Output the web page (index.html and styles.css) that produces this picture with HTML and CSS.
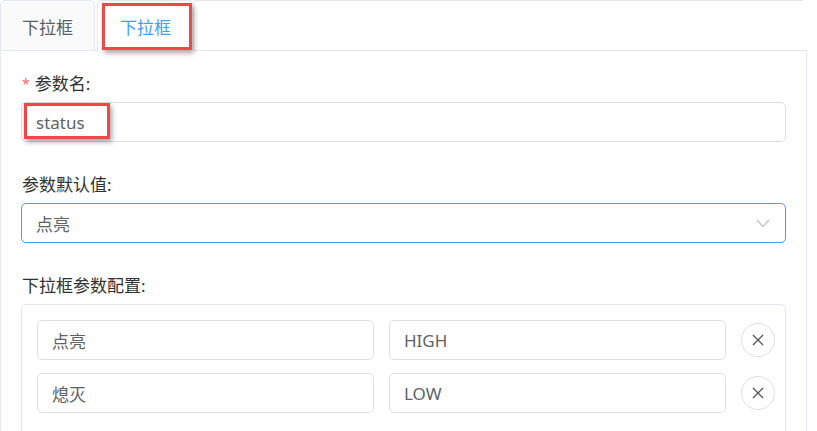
FILE: index.html
```html
<!DOCTYPE html>
<html lang="zh-CN">
<head>
<meta charset="utf-8">
<title>下拉框</title>
<link rel="stylesheet" href="styles.css">
</head>
<body>
<div class="tabs">
  <div class="tab-bar">
    <div class="tab">下拉框</div>
    <div class="tab active">下拉框<span class="mark mark-tab"></span></div>
    <div class="tab-fill"></div>
  </div>
  <div class="panel">
    <div class="field">
      <div class="label"><span class="req">*</span>参数名:</div>
      <div class="input"><span class="val">status</span><span class="mark mark-input"></span></div>
    </div>
    <div class="field">
      <div class="label">参数默认值:</div>
      <div class="input select"><span class="val">点亮</span>
        <svg class="chev" width="14" height="9" viewBox="0 0 14 9"><path d="M1 1 L7 7.5 L13 1" fill="none" stroke="#c0c4cc" stroke-width="1.3"/></svg>
      </div>
    </div>
    <div class="field">
      <div class="label">下拉框参数配置:</div>
      <div class="config">
        <div class="row">
          <div class="input small"><span class="val">点亮</span></div>
          <div class="input small"><span class="val">HIGH</span></div>
          <div class="del"><svg width="12" height="12" viewBox="0 0 12 12"><path d="M1 1 L11 11 M11 1 L1 11" stroke="#555" stroke-width="1.3"/></svg></div>
        </div>
        <div class="row">
          <div class="input small"><span class="val">熄灭</span></div>
          <div class="input small"><span class="val">LOW</span></div>
          <div class="del"><svg width="12" height="12" viewBox="0 0 12 12"><path d="M1 1 L11 11 M11 1 L1 11" stroke="#555" stroke-width="1.3"/></svg></div>
        </div>
      </div>
    </div>
  </div>
</div>
</body>
</html>
```
FILE: styles.css
```css
* { box-sizing: border-box; }
body {
  margin: 0;
  background: #fff;
  font-family: "Noto Sans", "Noto Sans CJK SC", sans-serif;
  font-size: 17px;
  color: #303133;
  width: 817px;
  height: 431px;
  overflow: hidden;
}
.tabs { width: 807px; }
.tab-bar {
  display: flex;
  height: 51px;
  margin-bottom: -1px;
  position: relative;
  z-index: 1;
}
.tab {
  width: 95px;
  height: 51px;
  border: 1px solid #e4e7ed;
  border-bottom: 1px solid #e4e7ed;
  border-radius: 5px 5px 0 0;
  background: #fafafa;
  color: #5a5e66;
  display: flex;
  align-items: center;
  justify-content: center;
  font-size: 17px;
  padding-top: 2px;
}
.tab.active {
  width: 97px;
  margin-left: 2px;
  background: #fff;
  color: #409eff;
  border-bottom-color: #fff;
  position: relative;
}
.tab-fill {
  width: 609px;
  height: 1px;
  border-top: 1px solid #e4e7ed;
}
.panel {
  border: 1px solid #e4e7ed;
  border-bottom: none;
  height: 381px;
  padding: 21px 20px 0 20px;
}
.field { margin-bottom: 31px; }
.label {
  height: 24px;
  line-height: 24px;
  margin-bottom: 6px;
  color: #303133;
  padding-left: 1px;
}
.req {
  color: #f56c6c;
  font-size: 14px;
  margin-right: 5px;
  position: relative;
  top: -1px;
}
.input {
  position: relative;
  height: 40px;
  border: 1px solid #dcdfe6;
  border-radius: 5px;
  display: flex;
  align-items: center;
  padding-left: 14px;
  color: #606266;
  background: #fff;
}
.select {
  border-color: #409eff;
  justify-content: space-between;
  padding-right: 15px;
}
.config {
  border: 1px solid #e4e7ed;
  border-radius: 5px;
  height: 140px;
  padding: 15px 12px 0 15px;
}
.row {
  display: flex;
  align-items: center;
  gap: 15px;
  margin-bottom: 13px;
}
.input.small {
  width: 337px;
  flex: none;
}
.del {
  width: 34px;
  height: 34px;
  border: 1px solid #dcdfe6;
  border-radius: 50%;
  display: flex;
  align-items: center;
  justify-content: center;
  flex: none;
}
.mark {
  position: absolute;
  border: 3px solid #f04848;
  box-shadow: 2px 3px 5px rgba(0, 0, 0, 0.35);
  pointer-events: none;
}
.mark-tab {
  left: 4px;
  top: 2px;
  width: 90px;
  height: 47px;
}
.mark-input {
  left: 2px;
  top: 0px;
  width: 86px;
  height: 36px;
}
```
